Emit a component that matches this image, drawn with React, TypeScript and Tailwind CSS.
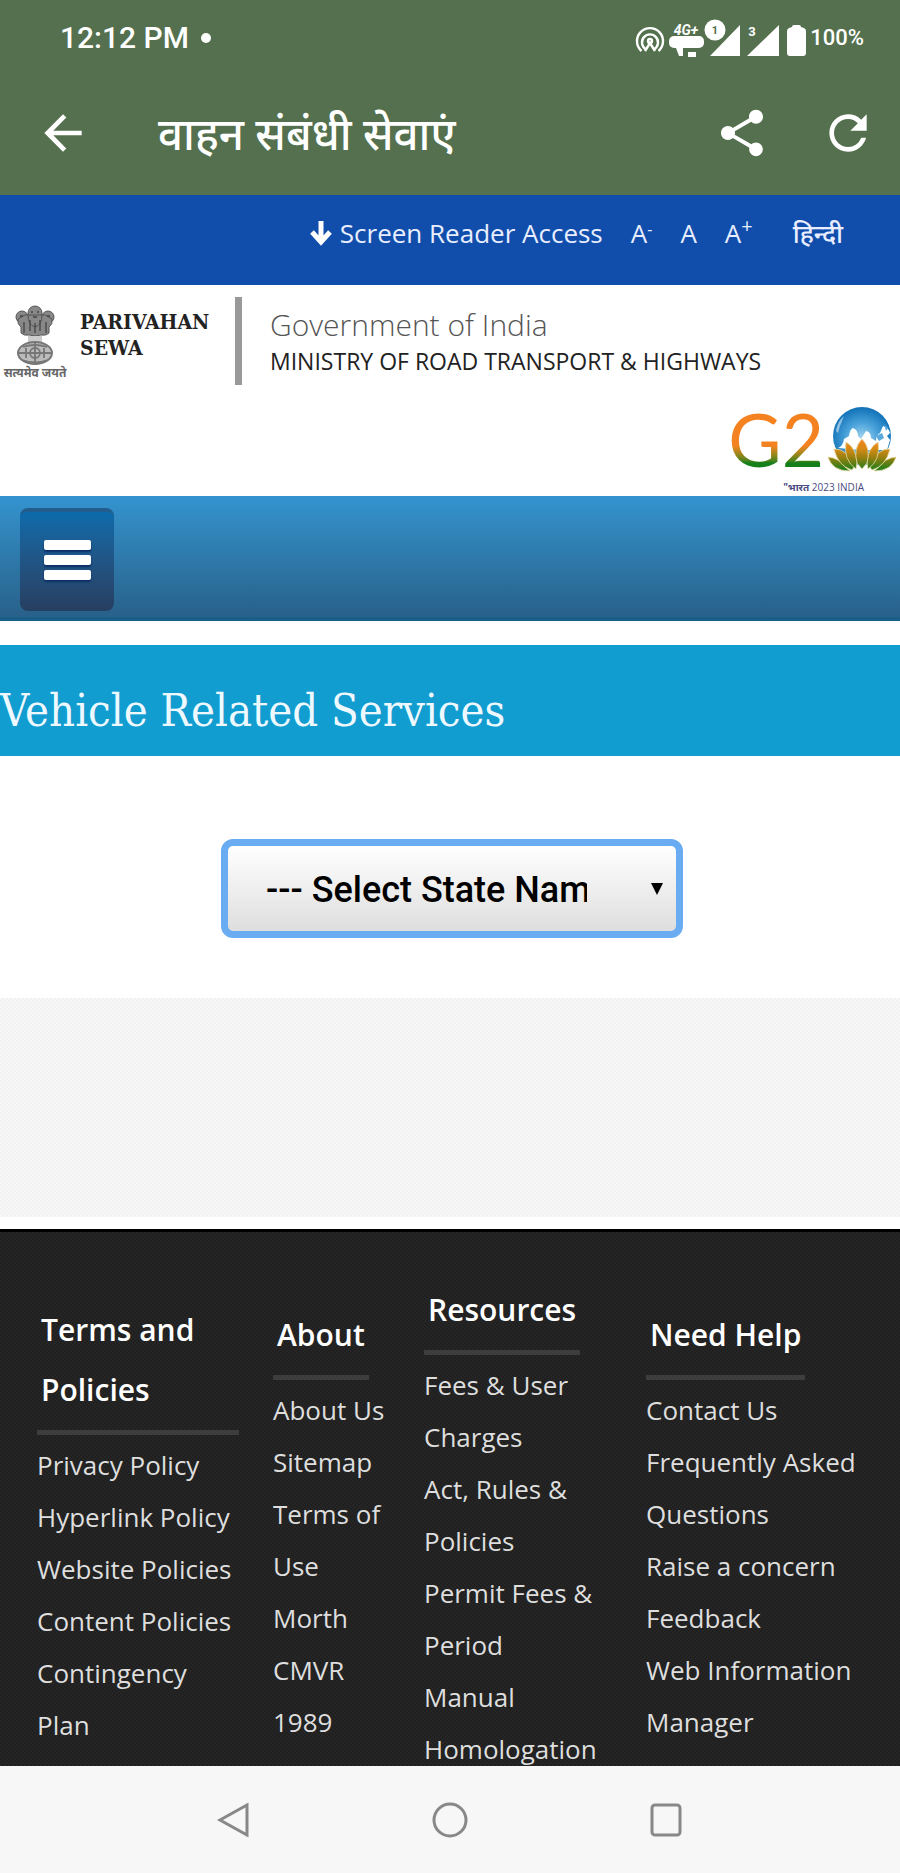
import { useState } from 'react';
import { MdArrowBack, MdRefresh, MdShare } from 'react-icons/md';

const columns = [
  {
    title: 'Terms and Policies',
    pad: 'pt-[68px]',
    links: ['Privacy Policy', 'Hyperlink Policy', 'Website Policies', 'Content Policies', 'Contingency Plan'],
  },
  { title: 'About', pad: 'pt-[73px]', links: ['About Us', 'Sitemap', 'Terms of Use', 'Morth', 'CMVR 1989'] },
  {
    title: 'Resources',
    pad: 'pt-12',
    links: ['Fees & User Charges', 'Act, Rules & Policies', 'Permit Fees & Period', 'Manual', 'Homologation'],
  },
  {
    title: 'Need Help',
    pad: 'pt-[73px]',
    links: ['Contact Us', 'Frequently Asked Questions', 'Raise a concern', 'Feedback', 'Web Information Manager'],
  },
];

function StatusIcons() {
  return (
    <svg width="174" height="40" viewBox="0 0 174 40" fill="#fff" aria-hidden="true">
      {/* hotspot */}
      <g fill="none" stroke="#fff" strokeWidth="2.4">
        <path d="M9.500 33a13 13 0 1 1 17 0" />
        <path d="M13.500 31a8 8 0 1 1 9 0" />
        <path d="M13 33l5-8 5 8" />
        <circle cx="18" cy="23" r="2" />
      </g>
      {/* VoLTE */}
      <text x="54" y="17" textAnchor="middle" fontSize="14" fontWeight="700" fontStyle="italic">4G+</text>
      <rect x="37" y="18" width="35" height="12" rx="5" />
      <path d="M44 30h7v8h-4zM56 34h8v5h-8z" />
      <circle cx="83" cy="12" r="10.500" />
      <text x="83" y="16" textAnchor="middle" fontSize="11" fontWeight="700" fill="#54704e">1</text>
      {/* signal strength */}
      <path d="M78 38 108 7v31z" />
      <text x="120" y="18" textAnchor="middle" fontSize="13" fontWeight="700">3</text>
      <path d="M115 38 147 7v31z" />
      {/* battery */}
      <path d="M157 10q-2 1-2 3v22q0 3 3 3h13q3 0 3-3V13q0-2-2-3l-3-1q0-2-2-2h-5q-2 0-2 2z" />
    </svg>
  );
}

function Emblem() {
  return (
    <svg width="40" height="62" viewBox="0 0 40 62" aria-label="State Emblem of India">
      <g fill="#888" stroke="#555" strokeWidth="1">
        <circle cx="7" cy="12" r="6" />
        <circle cx="33" cy="12" r="6" />
        <path d="M3 14q-1 5 3 8v6q3 3 8 2l6 1 6-1q5 1 8-2v-6q4-3 3-8l-7-4H10z" />
        <circle cx="20" cy="8" r="7" />
        <path d="M13 10q0 10 7 12 7-2 7-12z" />
      </g>
      <g stroke="#444" strokeWidth="1.3" fill="none">
        <path d="M16 7h2M22 7h2M18 12h4M15 15v11M20 18v10M25 15v11M9 17v11M31 17v11M5 11h3M32 11h3" />
      </g>
      <path d="M13 31h14v6H13z" fill="#ccc" />
      <ellipse cx="20" cy="48" rx="17" ry="11" fill="#bbb" stroke="#777" strokeWidth="2" />
      <g fill="none" stroke="#777" strokeWidth="1.8">
        <path d="M3 48h34M8 42q12-4 24 0M7 55q13 5 26 0" />
        <circle cx="20" cy="48" r="5" />
        <path d="M20 38v20M11 43v10M29 43v10" />
      </g>
    </svg>
  );
}

function LotusGlobe() {
  return (
    <svg width="68" height="66" viewBox="0 0 68 66" aria-hidden="true">
      <defs>
        <radialGradient id="globe" cx="50%" cy="55%" r="55%">
          <stop offset="0" stopColor="#a9d8f2" />
          <stop offset="0.5" stopColor="#4ba3da" />
          <stop offset="1" stopColor="#0f70b7" />
        </radialGradient>
        <linearGradient id="petal" x1="0" y1="34" x2="0" y2="64" gradientUnits="userSpaceOnUse">
          <stop offset="0" stopColor="#f58220" />
          <stop offset="0.3" stopColor="#d58a14" />
          <stop offset="0.6" stopColor="#948010" />
          <stop offset="1" stopColor="#1b7d1b" />
        </linearGradient>
      </defs>
      <circle cx="34" cy="30" r="29" fill="url(#globe)" />
      <g fill="#fff">
        <path d="M10 42q5-2 6-9l5-3q1-7 4-8 5 2 5 8l3 3 5-8q5 1 5 7l5 3q0-6 4-8l3-7q6 2 7 7l-3 3 3 4-3 10H34z" />
        <path d="M13 13l3-3-4 10-2 7-2-2q1-7 5-12z" opacity="0.500" />
      </g>
      <path d="M48 30l6-3 2 5-5 3zM56 18l4 4-2 3z" fill="#5aa9dc" />
      <g fill="url(#petal)" stroke="#e8d9a0" strokeWidth="0.800">
        <path d="M0 51q11 1 17 10l5 4Q4 65 0 51zM68 51q-11 1-17 10l-5 4q18 0 22-14z" />
        <path d="M6 43q13-1 20 18l-2 3Q10 60 6 43zM62 43q-13-1-20 18l2 3q14-4 18-21z" />
        <path d="M18 36q10 6 11 20l-1 7q-13-9-10-27zM50 36q-10 6-11 20l1 7q13-9 10-27z" />
        <path d="M34 33q9 9 5 24l-5 6-5-6q-4-15 5-24z" />
      </g>
    </svg>
  );
}

export default function App() {
  const [state, setState] = useState('');

  return (
    <div className="flex h-screen flex-col overflow-hidden bg-white font-['Open_Sans','Noto_Sans',sans-serif]">
      <header className="shrink-0 bg-[#54704e] text-white">
        <div className="flex h-[75px] items-center justify-between pr-9 pl-[60px] font-['Roboto',sans-serif]">
          <div className="flex items-center gap-3 text-[30px] font-medium">
            12:12 PM
            <span className="size-[10px] rounded-full bg-white" />
          </div>
          <div className="flex items-center">
            <StatusIcons />
            <span className="pl-1 text-[22px] font-medium">100%</span>
          </div>
        </div>
        <div className="flex h-[120px] items-start pt-[30px] pr-6 pl-[35px]">
          <button aria-label="Back">
            <MdArrowBack size={56} />
          </button>
          <h1 className="ml-[67px] flex-1 font-['Noto_Sans','Noto_Sans_Devanagari',sans-serif] text-[44px] leading-[56px] font-medium">
            वाहन संबंधी सेवाएं
          </h1>
          <button aria-label="Share" className="mr-[50px]">
            <MdShare size={56} />
          </button>
          <button aria-label="Refresh">
            <MdRefresh size={56} />
          </button>
        </div>
      </header>

      <main className="flex-1 overflow-hidden">
        <nav className="flex h-[90px] items-start justify-end bg-[#114dab] pt-5 pr-[57px] text-[26px] leading-9 font-medium text-[#e8edff]">
          <a href="#main" className="flex items-center gap-2">
            <svg width="22" height="26" viewBox="0 0 22 26" fill="none" stroke="#fff" strokeWidth="5" aria-hidden="true">
              <path d="M11 1v20M2 12l9 10 9-10" />
            </svg>
            Screen Reader Access
          </a>
          <button className="ml-7">A<sup className="text-[16px]">-</sup></button>
          <button className="ml-7">A</button>
          <button className="ml-7">A<sup className="text-[20px]">+</sup></button>
          <a href="#hi" className="ml-10">हिन्दी</a>
        </nav>

        <div className="h-[211px]">
          <div className="flex items-start pt-3 pl-1">
            <div className="flex w-[62px] flex-col items-center pt-2">
              <Emblem />
              <span className="text-[12px] leading-3 font-bold whitespace-nowrap text-[#666]">सत्यमेव जयते</span>
            </div>
            <div className="mt-3 ml-[14px] w-[155px] font-['DejaVu_Serif_Condensed','DejaVu_Serif',serif] text-[21px] leading-[26px] font-bold text-[#222]">
              PARIVAHAN<br />SEWA
            </div>
            <div className="h-[88px] w-[7px] bg-[#999]" />
            <div className="ml-7 pt-[10px]">
              <p className="text-[30px] leading-9 font-light text-[#555]">Government of India</p>
              <p className="text-[23px] leading-9 font-medium text-[#222]">MINISTRY OF ROAD TRANSPORT &amp; HIGHWAYS</p>
            </div>
          </div>
          <div className="mt-5 flex justify-end pr-1">
            <div className="flex flex-col items-end">
              <div className="flex items-center gap-1" role="img" aria-label="G20">
                <span className="bg-linear-to-b from-[#f58220] from-60% to-[#14801b] to-85% bg-clip-text font-['Lato',sans-serif] text-[73px] leading-[68px] text-transparent">
                  G2
                </span>
                <LotusGlobe />
              </div>
              <span className="mt-2 pr-8 text-[10px] leading-3 text-[#4a4a80]">
                <b>"भारत</b> 2023 INDIA
              </span>
            </div>
          </div>
        </div>

        <div className="flex h-[125px] items-start border-b-4 border-[#1b5f88] bg-linear-to-b from-[#3494cf] to-[#28618a] pt-3 pl-5">
          <button
            aria-label="Menu"
            className="flex h-[103px] w-[94px] flex-col items-center justify-center gap-[5px] rounded-lg border-t-4 border-[#225d8e] bg-linear-to-b from-[#0b6bab] to-[#263f60] pb-1"
          >
            <span className="h-[10px] w-[47px] rounded-xs bg-white shadow-[0_2px_2px_#0a2f66]" />
            <span className="h-[10px] w-[47px] rounded-xs bg-white shadow-[0_2px_2px_#0a2f66]" />
            <span className="h-[10px] w-[47px] rounded-xs bg-white shadow-[0_2px_2px_#0a2f66]" />
          </button>
        </div>

        <h2 className="mt-6 h-[111px] bg-[#119dd0] pt-8 font-['DejaVu_Serif_Condensed','DejaVu_Serif',serif] text-[45px] leading-[68px] text-[#eef8ff]">
          Vehicle Related Services
        </h2>

        <div className="flex h-[242px] justify-center pt-[83px] pl-1">
          <div className="relative h-[99px] w-[462px]">
            <select
              aria-label="State name"
              value={state}
              onChange={e => setState(e.target.value)}
              className="size-full appearance-none rounded-xl border-[7px] border-[#6aacf2] bg-linear-to-b from-white to-[#dedede] pt-[3px] pr-[89px] pl-[38px] font-['Roboto',sans-serif] text-[36px] font-medium text-black outline-none"
            >
              <option value="">--- Select State Name ---</option>
            </select>
            <svg className="pointer-events-none absolute top-11 right-5 text-black" width="12" height="12" viewBox="0 0 12 12" aria-hidden="true">
              <path d="M0 0h12L6 12z" fill="currentColor" />
            </svg>
          </div>
        </div>

        <div className="h-[219px] bg-[#f5f5f5] bg-[repeating-conic-gradient(#f1f1f1_0_25%,#f7f7f7_0_50%)] bg-[length:4px_4px]" />

        <footer className="mt-3 grid grid-cols-[236fr_151fr_222fr_254fr] border-t-3 border-black bg-[#222] bg-[repeating-conic-gradient(#202020_0_25%,#252525_0_50%)] bg-[length:4px_4px] pl-[37px]">
          {columns.map(col => (
            <section key={col.title} className={`${col.pad} pr-[34px]`}>
              <h3 className="mb-1 w-fit border-b-5 border-[#3d3d3d] px-1 pb-[10px] text-[30px] leading-[60px] font-semibold text-white">
                {col.title}
              </h3>
              <ul className="text-[26px] leading-[52px] font-medium text-[#dedede]">
                {col.links.map(link => (
                  <li key={link}><a href="#">{link}</a></li>
                ))}
              </ul>
            </section>
          ))}
        </footer>
      </main>

      <nav className="flex h-[107px] shrink-0 items-center justify-center gap-[180px] bg-[#f7f7f7] text-[#888]">
        <button aria-label="Back">
          <svg width="36" height="36" viewBox="0 0 36 36" fill="none" stroke="currentColor" strokeWidth="3">
            <path d="M4 18 31 3v30z" />
          </svg>
        </button>
        <button aria-label="Home">
          <svg width="36" height="36" viewBox="0 0 36 36" fill="none" stroke="currentColor" strokeWidth="3">
            <circle cx="18" cy="18" r="16" />
          </svg>
        </button>
        <button aria-label="Recents">
          <svg width="36" height="36" viewBox="0 0 36 36" fill="none" stroke="currentColor" strokeWidth="3">
            <rect x="4" y="3" width="28" height="30" rx="3" />
          </svg>
        </button>
      </nav>
    </div>
  );
}
